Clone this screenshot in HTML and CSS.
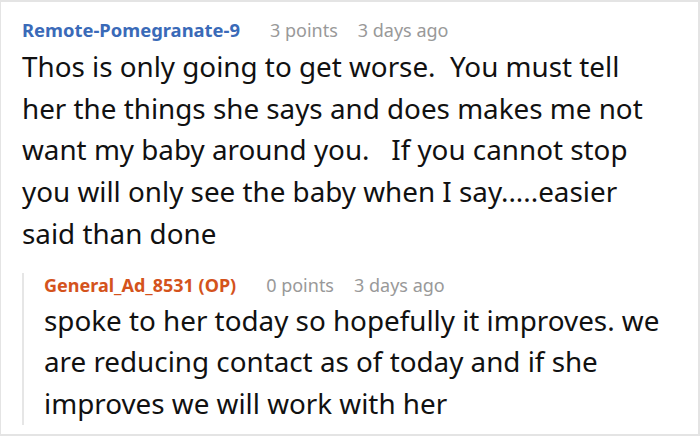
FILE: index.html
```html
<!DOCTYPE html>
<html>
<head>
<meta charset="utf-8">
<link rel="stylesheet" href="styles.css">
</head>
<body>
<div class="frame">
  <div class="comment">
    <div class="meta">
      <span class="author">Remote-Pomegranate-9</span>
      <span class="info">3 points</span>
      <span class="info">3 days ago</span>
    </div>
    <div class="body">Thos is only going to get worse.&nbsp; You must tell her the things she says and does makes me not want my baby around you.&nbsp;&nbsp; If you cannot stop you will only see the baby when I say.....easier said than done</div>
    <div class="reply">
      <div class="meta">
        <span class="author op">General_Ad_8531 (OP)</span>
        <span class="info">0 points</span>
        <span class="info">3 days ago</span>
      </div>
      <div class="body">spoke to her today so hopefully it improves. we are reducing contact as of today and if she improves we will work with her</div>
    </div>
  </div>
</div>
</body>
</html>
```
FILE: styles.css
```css
html, body { margin: 0; padding: 0; background: #fff; }
body { font-family: "Noto Sans", "Open Sans", sans-serif; }
.frame {
  width: 700px; height: 436px; box-sizing: border-box;
  border: 2px solid #e4e4e4; border-left-width: 1px; overflow: hidden;
  padding: 16px 20px 0 21px;
}
.meta { display: flex; gap: 20px; font-family: "Noto Sans", "Open Sans", sans-serif; font-size: 18px; line-height: 24px; align-items: baseline; }
.author { font-weight: 700; color: #3a6ab8; margin-right: 10px; font-size: 18.4px; }
.author.op { color: #d4531c; font-size: 18px; }
.info { color: #999; }
.body { font-size: 27.8px; line-height: 41.7px; color: #111; margin-top: 4px; width: 645px; }
.reply { margin-top: 28px; border-left: 2px solid #e6e6e6; padding-left: 20px; }
.reply .meta { margin-top: -10px; }
.reply .body { width: 623px; margin-top: 3px; margin-bottom: -7px; }
```
